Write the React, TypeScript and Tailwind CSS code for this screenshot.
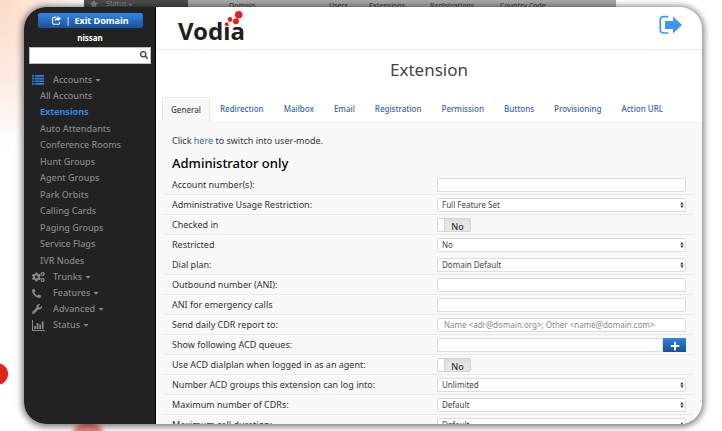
import { FaCogs, FaPhone, FaWrench, FaSearch, FaPlus, FaStar, FaCaretDown } from "react-icons/fa";

const accountLinks = [
  "All Accounts",
  "Extensions",
  "Auto Attendants",
  "Conference Rooms",
  "Hunt Groups",
  "Agent Groups",
  "Park Orbits",
  "Calling Cards",
  "Paging Groups",
  "Service Flags",
  "IVR Nodes",
];

const tabs = [
  "General",
  "Redirection",
  "Mailbox",
  "Email",
  "Registration",
  "Permission",
  "Buttons",
  "Provisioning",
  "Action URL",
];

type Field = {
  id: string;
  label: string;
  kind: "text" | "select" | "toggle" | "add";
  value?: string;
  noLine?: boolean;
};

const fields: Field[] = [
  { id: "account", label: "Account number(s):", kind: "text" },
  { id: "usage", label: "Administrative Usage Restriction:", kind: "select", value: "Full Feature Set" },
  { id: "checked", label: "Checked in", kind: "toggle" },
  { id: "restricted", label: "Restricted", kind: "select", value: "No", noLine: true },
  { id: "dialplan", label: "Dial plan:", kind: "select", value: "Domain Default" },
  { id: "ani", label: "Outbound number (ANI):", kind: "text" },
  { id: "emergency", label: "ANI for emergency calls", kind: "text" },
  { id: "cdr", label: "Send daily CDR report to:", kind: "text", value: "Name <adr@domain.org>; Other <name@domain.com>" },
  { id: "queues", label: "Show following ACD queues:", kind: "add" },
  { id: "acd", label: "Use ACD dialplan when logged in as an agent:", kind: "toggle" },
  { id: "groups", label: "Number ACD groups this extension can log into:", kind: "select", value: "Unlimited" },
  { id: "maxcdr", label: "Maximum number of CDRs:", kind: "select", value: "Default" },
  { id: "duration", label: "Maximum call duration:", kind: "select", value: "Default" },
];

const ListIcon = () => (
  <svg viewBox="0 0 12 10" className="h-[10px] w-3" fill="#2f7fe0">
    <path d="M0 0h2v1.700H0zM0 2.700h2v1.700H0zM0 5.400h2v1.700H0zM0 8.100h2v1.700H0z" />
    <path d="M3 0h9v1.700H3zM3 2.700h9v1.700H3zM3 5.400h9v1.700H3zM3 8.100h9v1.700H3z" />
  </svg>
);

const ChartIcon = () => (
  <svg viewBox="0 0 13 11" className="h-[11px] w-[13px]" fill="currentColor">
    <path d="M0 0h1v10h12v1H0z" />
    <path d="M2 6h1.800v3H2zM4.600 3h1.800v6H4.600zM7.200 4.500h1.800v4.500H7.200zM9.800 1.500h1.800V9H9.800z" />
  </svg>
);

const ShareIcon = () => (
  <svg viewBox="0 0 9 9" className="h-[9px] w-[9px]" fill="none">
    <path d="M4 1.200H2C1.100 1.200.6 1.700.6 2.500v4.300c0 .9.500 1.400 1.400 1.400h4.200c.9 0 1.400-.5 1.400-1.400V6" stroke="#fff" strokeWidth="1.100" />
    <path d="M5.700 0 9 2.700 5.700 5.300V3.800C4.200 3.700 3.400 4.300 3 5.600 2.600 3.300 3.600 1.700 5.700 1.600z" fill="#fff" />
  </svg>
);

const Logo = () => (
  <a href="#" className="relative block text-[24px] leading-8 font-bold text-[#1f1f1f]">
    Vodia
    <svg viewBox="0 0 68 36" className="absolute -top-1 left-0 h-9 w-[68px]">
      <path d="M45.500 2h7.500v14h-7.500z" fill="#fff" />
      <g fill="#e2231a">
        <circle cx="48.700" cy="13.200" r="2" />
        <circle cx="52" cy="8.500" r="2.400" />
        <circle cx="58" cy="10.300" r="3" />
        <circle cx="60.700" cy="3.800" r="3.800" />
      </g>
    </svg>
  </a>
);

const MenuGroup = ({ icon, name }: { icon: React.ReactNode; name: string }) => (
  <button className="flex h-4 w-full items-center text-left">
    <span className="flex w-[21px] items-center">{icon}</span>
    {name}
    <FaCaretDown className="ml-[2px] h-2 w-2" />
  </button>
);

const inputStyle =
  "h-[14px] w-full rounded-[2px] border border-[#dcdcdc] bg-white px-1 text-[8px] leading-3 text-[#444] placeholder:text-[#888]";

const Control = ({ field }: { field: Field }) => {
  if (field.kind === "select") {
    return (
      <div className="relative flex w-full">
        <select id={field.id} className={inputStyle + " appearance-none"}>
          <option>{field.value}</option>
        </select>
        <svg viewBox="0 0 4 6" className="pointer-events-none absolute top-1 right-[2px] h-[6px] w-1" fill="#333">
          <path d="M2 0l1.700 2.500H.3zM2 6 .3 3.500h3.400z" />
        </svg>
      </div>
    );
  }
  if (field.kind === "toggle") {
    return (
      <span className="relative flex h-[14px] w-[34px] overflow-hidden rounded-[2px] border border-[#d4d4d4] bg-[#e6e6e6] shadow-inner">
        <input
          id={field.id}
          type="checkbox"
          className="absolute inset-0 h-full w-full cursor-pointer appearance-none"
        />
        <span className="w-[7px] border-r border-[#d4d4d4] bg-white" />
        <span className="flex-1 pt-[2px] text-center text-[9px] leading-3 font-medium text-[#333]">No</span>
      </span>
    );
  }
  if (field.kind === "add") {
    return (
      <div className="flex w-full">
        <input id={field.id} type="text" className={inputStyle} />
        <button
          aria-label="Add queue"
          className="flex h-[14px] w-[23px] shrink-0 items-center justify-center bg-gradient-to-b from-[#2f83dc] to-[#194f96] text-white"
        >
          <FaPlus className="mt-[2px] h-[10px] w-[10px]" />
        </button>
      </div>
    );
  }
  return <input id={field.id} type="text" placeholder={field.value} className={inputStyle + " pl-[6px]"} />;
};

const Sidebar = () => (
  <aside className="w-[132px] shrink-0 border-r border-black bg-[#222] text-[9px] font-medium text-[#878787]">
    <div className="pt-[6px] pr-1 pl-[5px]">
      <div className="pr-2 pl-[9px]">
        <button className="flex h-[15px] w-full items-center justify-center gap-1 rounded-[2px] bg-gradient-to-b from-[#2f86e4] to-[#1d5299] font-bold text-white">
          <ShareIcon />
          <span className="font-normal">|</span>
          <span>Exit Domain</span>
        </button>
      </div>
      <p className="mt-1 text-center text-[8px] leading-3 font-bold text-white">nissan</p>
      <div className="relative mt-[3px]">
        <input
          aria-label="Search"
          type="text"
          className="block h-[17px] w-full border border-[#bbb] bg-white px-1 text-black"
        />
        <FaSearch className="absolute top-1 right-[3px] h-2 w-2 text-[#333]" />
      </div>
    </div>

    <nav className="pt-2 pl-2">
      <MenuGroup icon={<ListIcon />} name="Accounts" />
      <ul className="pl-2">
        {accountLinks.map((name) => (
          <li key={name} className="h-4 leading-4 even:mb-px">
            <a href="#" className={name === "Extensions" ? "font-bold text-[#2f86f0]" : ""}>
              {name}
            </a>
          </li>
        ))}
      </ul>
      <MenuGroup icon={<FaCogs className="h-3 w-[13px]" />} name="Trunks" />
      <MenuGroup icon={<FaPhone className="h-[9px] w-[9px] -scale-x-100" />} name="Features" />
      <MenuGroup icon={<FaWrench className="h-[10px] w-[10px]" />} name="Advanced" />
      <MenuGroup icon={<ChartIcon />} name="Status" />
    </nav>
  </aside>
);

const App = () => {
  return (
    <div
      className="relative h-screen overflow-hidden bg-white px-5 pt-[7px] pb-[7px] pl-6"
      style={{ fontFamily: '"Noto Sans", "Open Sans", sans-serif' }}
    >
      {/* Backdrop */}
      <div className="absolute top-0 left-0 h-40 w-24 bg-[radial-gradient(90px_150px_at_0_0,#fbdac8,#fdeae0_50%,#fff)]" />
      <div className="absolute top-[363px] -left-[14px] h-[22px] w-[22px] rounded-full bg-[#e2231a]" />
      <div className="absolute bottom-[-22px] left-[72px] h-8 w-8 rounded-full bg-[#f0857c] blur-[2px]" />
      <div className="absolute top-0 right-[106px] left-[84px] flex h-2 bg-[#a8a8a8] text-[7px] leading-[6px] font-medium text-[#444] shadow-md">
        <div className="flex w-[104px] items-center bg-[#4b4b4b] pl-[6px] text-[#888]">
          <FaStar className="mr-2 h-2 w-2" /> Status <FaCaretDown />
        </div>
        <div className="grid flex-1 grid-cols-[100px_40px_61px_70px_1fr] pt-[3px] pl-[41px]">
          <span>Domain</span>
          <span>Users</span>
          <span>Extensions</span>
          <span>Registrations</span>
          <span>Country Code</span>
        </div>
      </div>

      {/* Window */}
      <div className="relative flex h-full overflow-hidden rounded-[22px] bg-white shadow-[0_1px_6px_2px_rgba(0,0,0,0.5)]">
        <Sidebar />

        <main className="flex min-w-0 flex-1 flex-col">
          <header className="flex h-[43px] shrink-0 items-start justify-between border-b border-[#e8e8e8] pt-2 pr-5 pl-[22px]">
            <Logo />
            <button aria-label="Log out">
              <svg viewBox="0 0 23 20" className="h-5 w-[23px]" fill="none">
                <path d="M9.500 1.600H5C2.500 1.600 1.200 3 1.200 5v9.500c0 2 1.300 3.500 3.800 3.500h4.500" stroke="#3d95f5" strokeWidth="1.600" />
                <path d="M6 6h8V1.500l9 8.500-9 8.500V14H6z" fill="#3d95f5" />
              </svg>
            </button>
          </header>

          <h1 className="mt-2 shrink-0 text-center text-[17px] leading-6 text-[#444]">Extension</h1>

          <div className="mt-[15px] flex h-6 shrink-0 pl-[6px] text-[8px] leading-6 font-medium">
            {tabs.map((tab) => (
              <a
                key={tab}
                href="#"
                className={
                  tab === "General"
                    ? "rounded-t-[3px] border border-b-0 border-[#e8e8e8] bg-[#f8f8f8] px-2 text-[#444]"
                    : "px-[10px] text-[#3068ab]"
                }
              >
                {tab}
              </a>
            ))}
          </div>

          <section className="flex-1 overflow-hidden bg-[#f8f8f8] px-2 text-[9px] text-[#333]">
            <p className="mt-3 pl-2 leading-4">
              Click <a href="#" className="text-[#3068ab]">here</a> to switch into user-mode.
            </p>
            <h2 className="mt-1 pl-2 text-[13px] leading-5 font-medium text-black">Administrator only</h2>
            <form className="mt-[2px]">
              {fields.map((field) => (
                <div
                  key={field.id}
                  className={
                    "flex h-5 items-center border-b px-2 " + (field.noLine ? "border-transparent" : "border-[#e9e9e9]")
                  }
                >
                  <label htmlFor={field.id} className="w-1/2 shrink-0">
                    {field.label}
                  </label>
                  <div className="flex flex-1 pl-2">
                    <Control field={field} />
                  </div>
                </div>
              ))}
            </form>
          </section>
        </main>
      </div>
    </div>
  );
};

export default App;
